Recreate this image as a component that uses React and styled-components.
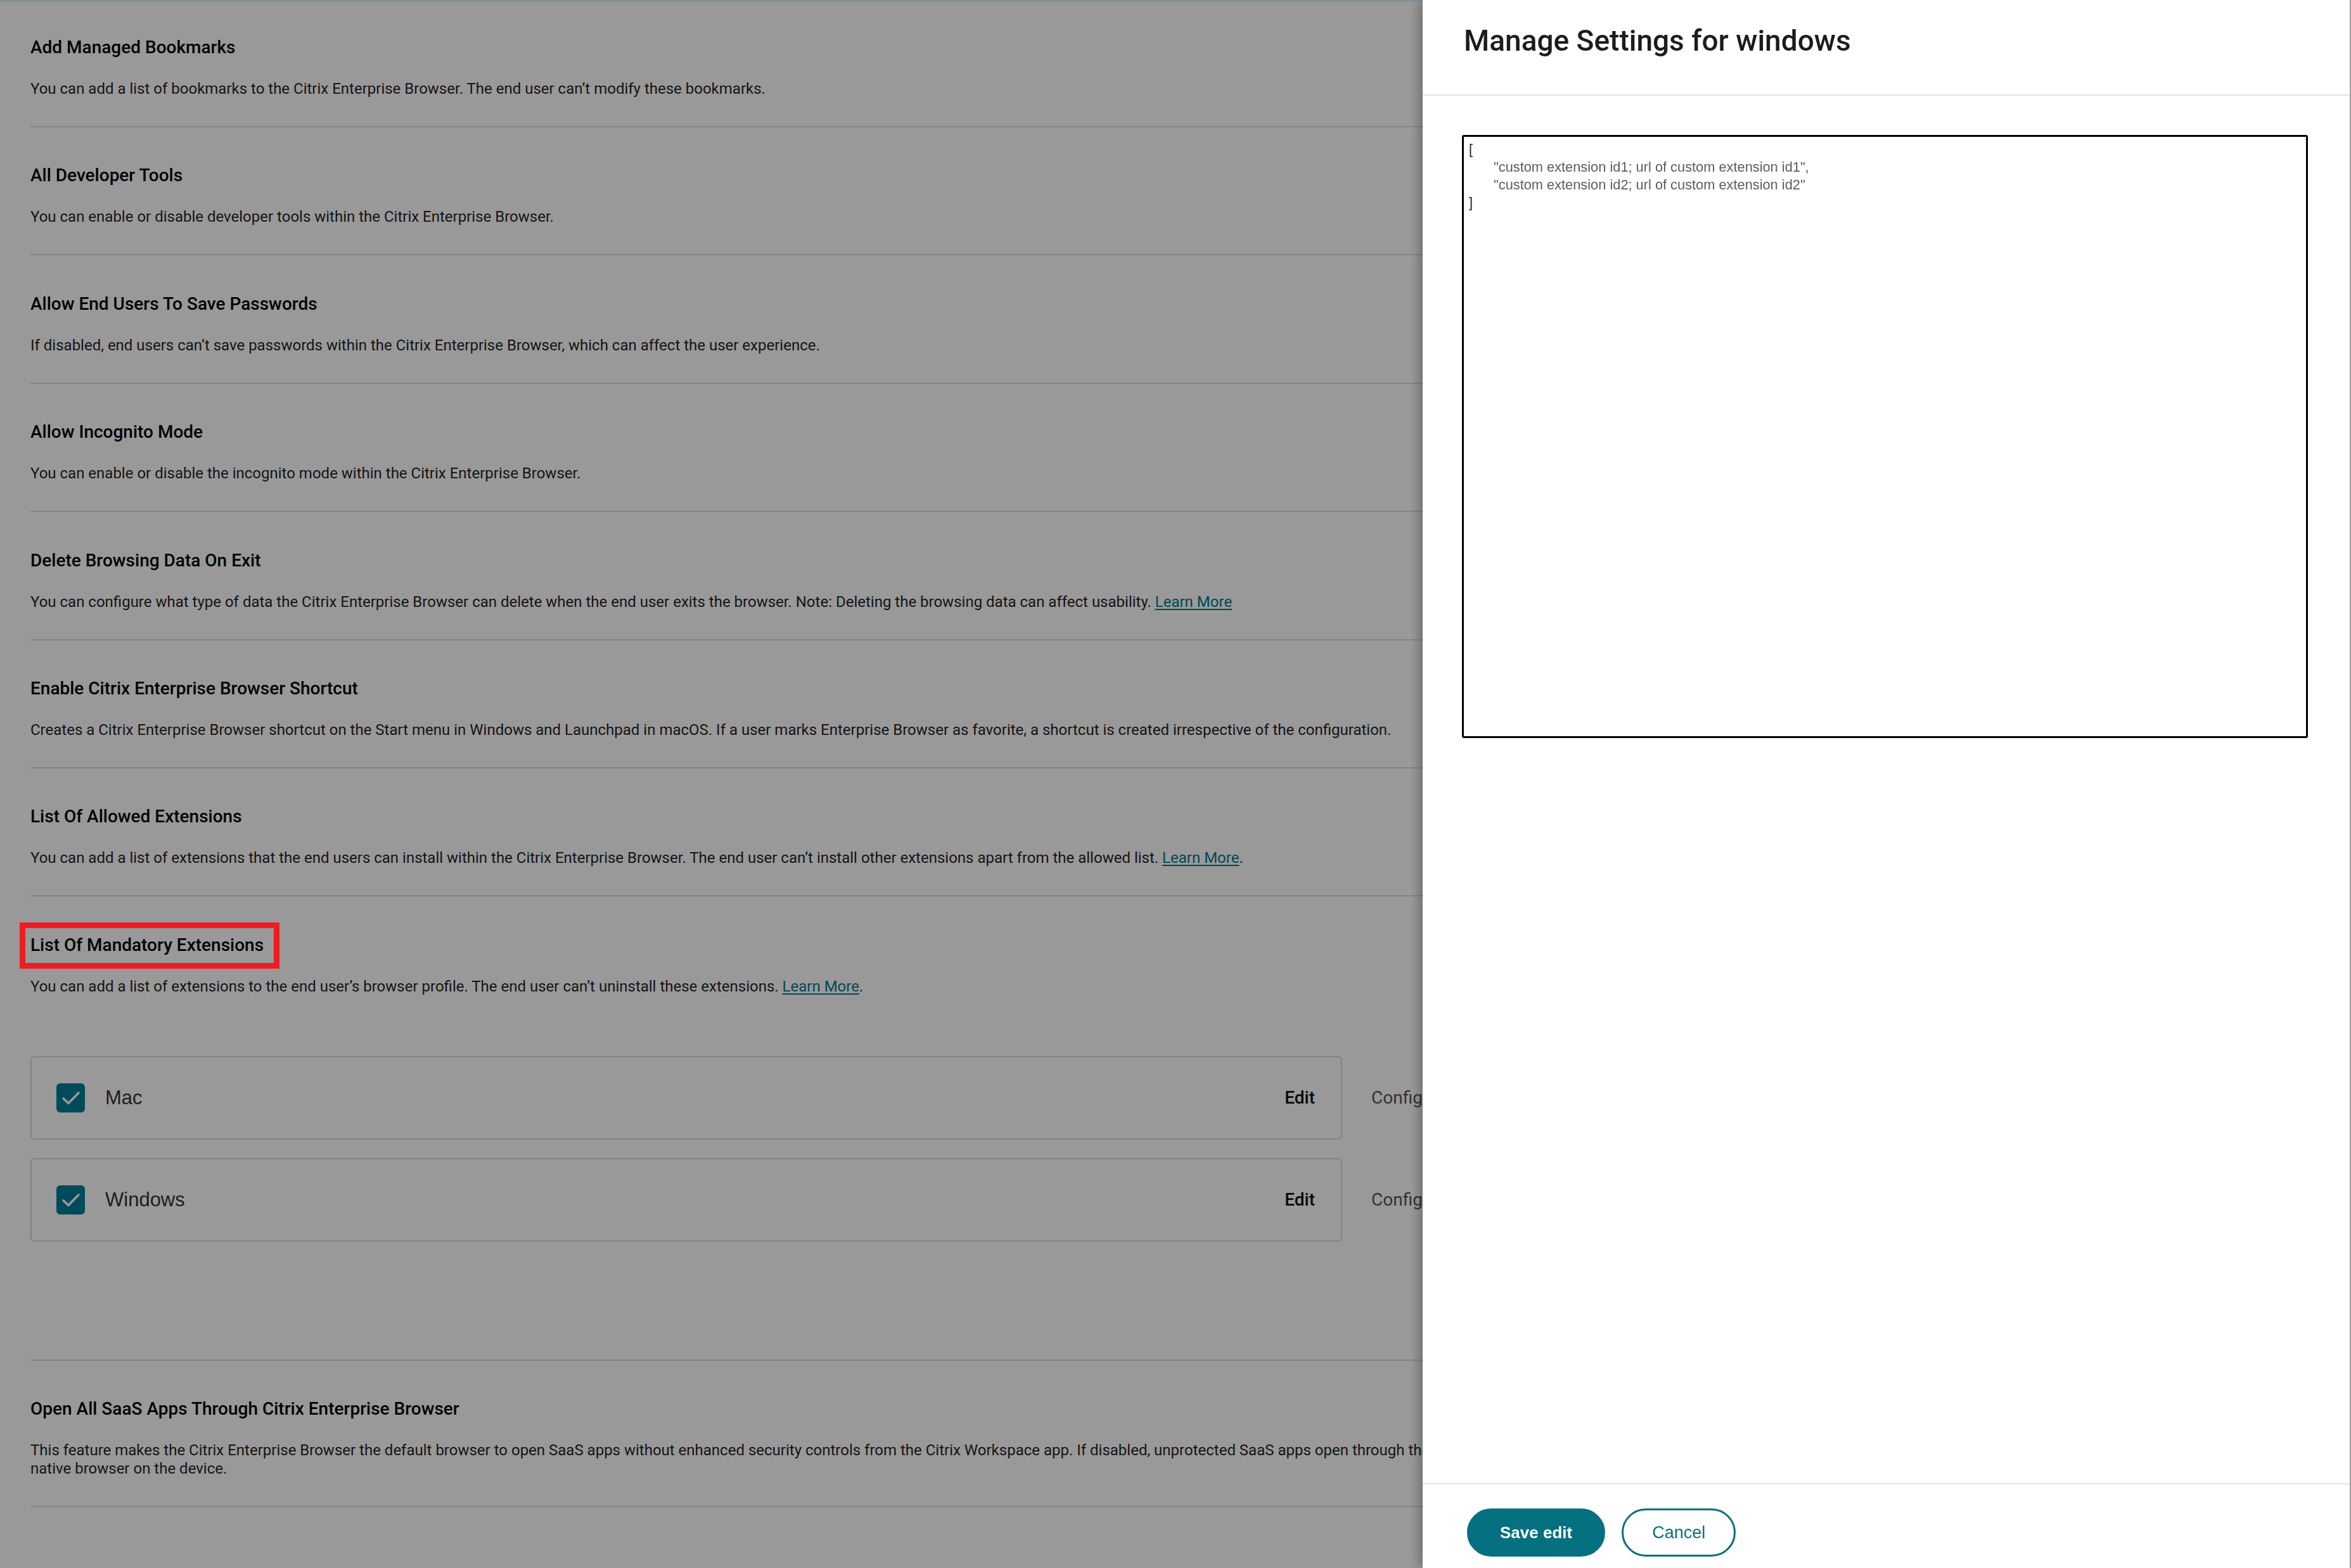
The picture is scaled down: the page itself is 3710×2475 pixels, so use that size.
import React from "react";
import styled, { createGlobalStyle } from "styled-components";

const GlobalStyle = createGlobalStyle`
  html, body {
    margin: 0;
    padding: 0;
    overflow: hidden;
    background: #ffffff;
    font-family: Roboto, "Liberation Sans", sans-serif;
  }
  * {
    box-sizing: border-box;
  }
`;

const Page = styled.div`
  min-height: 100vh;
  border-top: 3px solid #dcf0f8;
`;

const Content = styled.div`
  padding-left: 48px;
  width: 2300px;
`;

const Section = styled.section`
  padding: 58.4px 0 44px;
  border-bottom: 2px solid #dcdcdc;
  margin-right: -40px;

  &:first-child {
    padding-top: 54px;
  }
`;

const Title = styled.h3`
  margin: 0;
  font-size: 28px;
  line-height: 36px;
  font-weight: 500;
  color: #000;
`;

const Highlight = styled.span`
  position: relative;

  &::after {
    content: "";
    position: absolute;
    left: -17px;
    right: -25px;
    top: -19px;
    bottom: -21px;
    border: 9px solid #ee1d23;
    z-index: 15;
  }
`;

const Desc = styled.p`
  margin: 33px 40px 0 0;
  font-size: 24px;
  line-height: 29px;
  color: #262626;
`;

const Link = styled.a`
  color: #03788c;
  text-decoration: underline;
  text-underline-offset: 3px;
`;

const PlatformList = styled.div`
  display: flex;
  flex-direction: column;
  gap: 29px;
  margin: 95px 0 142px;
`;

const PlatformRow = styled.div`
  display: flex;
  align-items: center;
  gap: 46px;
`;

const Card = styled.div`
  width: 2070px;
  height: 132px;
  flex: none;
  display: flex;
  align-items: center;
  padding: 0 41px 0 39px;
  border: 2px solid #dadada;
  border-radius: 6px;
`;

const Checkbox = styled.span`
  width: 45px;
  height: 46px;
  flex: none;
  border-radius: 6px;
  background: #007d96;
  display: flex;
  align-items: center;
  justify-content: center;
`;

const PlatformName = styled.span`
  margin-left: 32px;
  font-family: "Liberation Sans", Arial, sans-serif;
  font-size: 31px;
  color: #333;
  flex: 1;
`;

const EditLink = styled.span`
  font-size: 28px;
  font-weight: 500;
  color: #111;
`;

const ConfigText = styled.span`
  font-size: 28px;
  color: #555;
  white-space: nowrap;
`;

const Overlay = styled.div`
  position: fixed;
  inset: 0;
  background: rgba(0, 0, 0, 0.4);
  z-index: 10;
`;

const Drawer = styled.aside`
  position: fixed;
  top: 0;
  right: 0;
  bottom: 0;
  width: 1465px;
  background: #ffffff;
  z-index: 20;
  display: flex;
  flex-direction: column;
  border-right: 2px solid #9c9c9c;
  box-shadow: -6px 0 16px rgba(0, 0, 0, 0.28);
`;

const DrawerHeader = styled.header`
  height: 151px;
  padding: 38px 0 0 65px;
  border-bottom: 2px solid #e2e2e2;
`;

const DrawerTitle = styled.h2`
  margin: 0;
  font-size: 46px;
  line-height: 52px;
  font-weight: 500;
  color: #1c1c1c;
`;

const DrawerBody = styled.div`
  flex: 1;
  padding: 62px 66px 0 62px;
`;

const Editor = styled.div`
  height: 952px;
  border: 3px solid #000;
  border-radius: 3px;
  padding: 6px 8px;
  font-family: "Liberation Sans", Arial, sans-serif;
  font-size: 21.8px;
  line-height: 28px;
  color: #5c5c5c;
`;

const CodeLine = styled.div`
  padding-left: ${(p) => p.$indent || 0}px;
  color: ${(p) => (p.$bracket ? "#222" : "#5c5c5c")};
`;

const DrawerFooter = styled.footer`
  height: 134px;
  border-top: 2px solid #e2e2e2;
  padding: 38px 70px 0;
  display: flex;
  gap: 26px;
  align-items: flex-start;
`;

const Button = styled.button`
  height: 76px;
  border-radius: 38px;
  font-family: "Liberation Sans", Arial, sans-serif;
  font-size: ${(p) => (p.$primary ? "26px" : "27px")};
  font-weight: ${(p) => (p.$primary ? 700 : 400)};
  padding: 0 ${(p) => (p.$primary ? "49px" : "45px")};
  border: 3px solid #047080;
  background: ${(p) => (p.$primary ? "#047080" : "#ffffff")};
  color: ${(p) => (p.$primary ? "#ffffff" : "#047080")};
  cursor: pointer;
`;

const sections = [
  {
    title: "Add Managed Bookmarks",
    desc: "You can add a list of bookmarks to the Citrix Enterprise Browser. The end user can’t modify these bookmarks.",
  },
  {
    title: "All Developer Tools",
    desc: "You can enable or disable developer tools within the Citrix Enterprise Browser.",
  },
  {
    title: "Allow End Users To Save Passwords",
    desc: "If disabled, end users can’t save passwords within the Citrix Enterprise Browser, which can affect the user experience.",
  },
  {
    title: "Allow Incognito Mode",
    desc: "You can enable or disable the incognito mode within the Citrix Enterprise Browser.",
  },
  {
    title: "Delete Browsing Data On Exit",
    desc: "You can configure what type of data the Citrix Enterprise Browser can delete when the end user exits the browser. Note: Deleting the browsing data can affect usability. ",
    link: "",
  },
  {
    title: "Enable Citrix Enterprise Browser Shortcut",
    desc: "Creates a Citrix Enterprise Browser shortcut on the Start menu in Windows and Launchpad in macOS. If a user marks Enterprise Browser as favorite, a shortcut is created irrespective of the configuration.",
  },
  {
    title: "List Of Allowed Extensions",
    desc: "You can add a list of extensions that the end users can install within the Citrix Enterprise Browser. The end user can’t install other extensions apart from the allowed list. ",
    link: ".",
  },
];

function CheckIcon() {
  return (
    <svg width="30" height="24" viewBox="0 0 30 24">
      <path d="M3 13 L11 20.5 L27 4" fill="none" stroke="#ffffff" strokeWidth="3.6" strokeLinecap="round" strokeLinejoin="round" />
    </svg>
  );
}

function Platform({ name }) {
  return (
    <PlatformRow>
      <Card>
        <Checkbox>
          <CheckIcon />
        </Checkbox>
        <PlatformName>{name}</PlatformName>
        <EditLink>Edit</EditLink>
      </Card>
      <ConfigText>Configured</ConfigText>
    </PlatformRow>
  );
}

export default function App() {
  return (
    <>
      <GlobalStyle />
      <Page>
        <Content>
          {sections.map((s) => (
            <Section key={s.title}>
              <Title>{s.title}</Title>
              <Desc>
                {s.desc}
                {s.link !== undefined && <Link>Learn More</Link>}
                {s.link}
              </Desc>
            </Section>
          ))}

          <Section>
            <Title>
              <Highlight>List Of Mandatory Extensions</Highlight>
            </Title>
            <Desc>
              You can add a list of extensions to the end user’s browser profile. The end user can’t uninstall these extensions.{" "}
              <Link>Learn More</Link>.
            </Desc>
            <PlatformList>
              <Platform name="Mac" />
              <Platform name="Windows" />
            </PlatformList>
          </Section>

          <Section>
            <Title>Open All SaaS Apps Through Citrix Enterprise Browser</Title>
            <Desc>
              This feature makes the Citrix Enterprise Browser the default browser to open SaaS apps without enhanced security controls from the Citrix Workspace app. If disabled, unprotected SaaS apps open through the native browser on the device.
            </Desc>
          </Section>
        </Content>
      </Page>

      <Overlay />

      <Drawer>
        <DrawerHeader>
          <DrawerTitle>Manage Settings for windows</DrawerTitle>
        </DrawerHeader>
        <DrawerBody>
          <Editor>
            <CodeLine $bracket>[</CodeLine>
            <CodeLine $indent={39}>"custom extension id1; url of custom extension id1",</CodeLine>
            <CodeLine $indent={39}>"custom extension id2; url of custom extension id2"</CodeLine>
            <CodeLine $bracket>]</CodeLine>
          </Editor>
        </DrawerBody>
        <DrawerFooter>
          <Button $primary>Save edit</Button>
          <Button>Cancel</Button>
        </DrawerFooter>
      </Drawer>
    </>
  );
}
